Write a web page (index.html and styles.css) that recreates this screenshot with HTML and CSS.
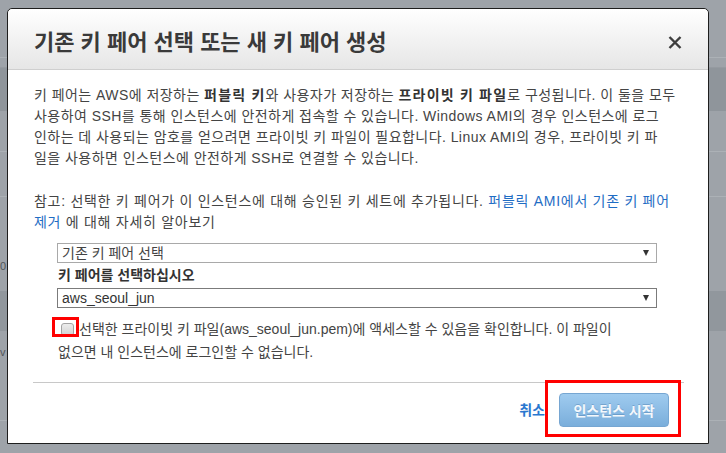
FILE: index.html
```html
<!DOCTYPE html>
<html lang="ko">
<head>
<meta charset="utf-8">
<title>키 페어</title>
<link rel="stylesheet" href="styles.css">
</head>
<body>
<div class="backdrop">
  <div class="band band-top"></div>
  <div class="band band-gap"></div>
  <div class="band band-dark"></div>
  <div class="band band-row"></div>
  <div class="band band-row2"></div>
  <div class="band band-tall"><span class="frag frag-0">0</span></div>
  <div class="band band-dark2"></div>
  <div class="band band-row3"><span class="frag frag-v">v</span></div>
  <div class="band band-rest"></div>
</div>

<div class="modal">
  <div class="modal-header">
    <h1 class="modal-title">기존 키 페어 선택 또는 새 키 페어 생성</h1>
    <span class="close-btn">
      <svg width="14" height="13" viewBox="0 0 14 13"><path d="M1.5 1 L12.5 12 M12.5 1 L1.5 12" stroke="#3d3d3d" stroke-width="2.4" fill="none"/></svg>
    </span>
  </div>
  <div class="modal-body">
    <p class="intro">키 페어는 AWS에 저장하는 <b>퍼블릭 키</b>와 사용자가 저장하는 <b>프라이빗 키 파일</b>로 구성됩니다. 이 둘을 모두<br>사용하여 SSH를 통해 인스턴스에 안전하게 접속할 수 있습니다. Windows AMI의 경우 인스턴스에 로그<br>인하는 데 사용되는 암호를 얻으려면 프라이빗 키 파일이 필요합니다. Linux AMI의 경우, 프라이빗 키 파<br>일을 사용하면 인스턴스에 안전하게 SSH로 연결할 수 있습니다.</p>
    <p class="note">참고: 선택한 키 페어가 이 인스턴스에 대해 승인된 키 세트에 추가됩니다. <a class="link" href="#">퍼블릭 AMI에서 기존 키 페어<br>제거</a> 에 대해 자세히 알아보기</p>
    <div class="form">
      <div class="select"><span>기존 키 페어 선택</span><span class="arrow"></span></div>
      <div class="field-label">키 페어를 선택하십시오</div>
      <div class="select select-focus"><span>aws_seoul_jun</span><span class="arrow"></span></div>
    </div>
    <p class="ack"><span class="checkbox"></span>선택한 프라이빗 키 파일(aws_seoul_jun.pem)에 액세스할 수 있음을 확인합니다. 이 파일이<br>없으면 내 인스턴스에 로그인할 수 없습니다.</p>
  </div>
  <div class="modal-footer">
    <a class="cancel" href="#">취소</a>
    <span class="launch">인스턴스 시작</span>
  </div>
</div>

<span class="mark mark-check"></span>
<span class="mark mark-launch"></span>
</body>
</html>
```

FILE: styles.css
```css
html, body {
  margin: 0;
  padding: 0;
}
body {
  width: 726px;
  height: 453px;
  overflow: hidden;
  background: #9ea3a9;
  font-family: "Liberation Sans", "Noto Sans CJK KR", sans-serif;
  font-size: 14px;
  color: #444;
}

/* dimmed page behind the modal */
.backdrop {
  display: flex;
  flex-direction: column;
  height: 453px;
}
.band { position: relative; }
.band-top { height: 57px; border-bottom: 1px solid #acb1b6; }
.band-gap { height: 9px; }
.band-dark { height: 43px; background: #8f959b; border-top: 1px solid #959aa0; }
.band-row { height: 40px; border-bottom: 1px solid #acb1b6; }
.band-row2 { height: 44px; border-bottom: 1px solid #acb1b6; }
.band-tall { height: 94px; }
.band-dark2 { height: 40px; background: #91979d; }
.band-row3 { height: 89px; border-bottom: 1px solid #acb1b6; }
.band-rest { flex: 1; }
.frag {
  position: absolute;
  left: 0;
  font-size: 11px;
  color: #50555a;
}
.frag-0 { top: 63px; }
.frag-v { top: 15px; }

/* modal */
.modal {
  position: absolute;
  left: 7px;
  top: 8px;
  width: 702px;
  height: 436px;
  box-sizing: border-box;
  background: #fff;
  border: 1px solid #1e1e1e;
  border-radius: 5px 5px 0 0;
  display: flex;
  flex-direction: column;
}
.modal-header {
  height: 61px;
  box-sizing: border-box;
  padding: 7px 26px 0 26px;
  display: flex;
  align-items: center;
  justify-content: space-between;
  background: linear-gradient(#ffffff, #e6e6e6);
  border-bottom: 1px solid #cfcfcf;
  border-radius: 5px 5px 0 0;
}
.modal-title {
  margin: 0;
  font-size: 22px;
  font-weight: 700;
  color: #3a3a3a;
  line-height: 28px;
}
.close-btn {
  display: flex;
  width: 14px;
  height: 13px;
}

.modal-body {
  padding: 15px 24px 0 26px;
}
.intro, .note {
  margin: 0;
  line-height: 21px;
  color: #444;
  white-space: nowrap;
}
.intro { letter-spacing: 0.45px; }
.intro b {
  font-weight: 700;
  color: #333;
  letter-spacing: 1.2px;
}
.note {
  margin-top: 22px;
  letter-spacing: 0.72px;
}
.link {
  color: #1f6dc4;
  text-decoration: none;
}

.form {
  margin: 10px 0 0 23px;
  width: 600px;
}
.select {
  height: 20px;
  box-sizing: border-box;
  border: 1px solid #a9a9a9;
  display: flex;
  align-items: center;
  justify-content: space-between;
  padding: 0 7px 0 4px;
  line-height: 18px;
  color: #444;
}
.select-focus {
  border-color: #7b7b7b;
  color: #333;
}
.arrow {
  width: 0;
  height: 0;
  border-left: 3.5px solid transparent;
  border-right: 3.5px solid transparent;
  border-top: 6px solid #333;
}
.field-label {
  margin: 2px 0 2px 1px;
  line-height: 21px;
  font-weight: 700;
  color: #333;
}

.ack {
  margin: 10px 0 0 24px;
  line-height: 23px;
  color: #444;
  white-space: nowrap;
}
.checkbox {
  display: inline-block;
  width: 13px;
  height: 13px;
  box-sizing: border-box;
  margin: 0 5px 0 3px;
  vertical-align: -2px;
  border: 1px solid #a3a3a3;
  border-radius: 3px;
  background: linear-gradient(#ececec, #d3d3d3);
}

.modal-footer {
  margin: 18px 24px 0 25px;
  padding: 10px 15px 0 0;
  border-top: 1px solid #c8c8c8;
  display: flex;
  justify-content: flex-end;
  align-items: center;
  gap: 14px;
}
.cancel {
  color: #2a78cf;
  font-weight: 700;
  text-decoration: none;
  line-height: 20px;
}
.launch {
  width: 110px;
  height: 34px;
  box-sizing: border-box;
  display: flex;
  align-items: center;
  justify-content: center;
  border: 1px solid #76a6d2;
  border-radius: 4px;
  background: linear-gradient(#9fcbef, #7aaedb);
  color: #f4f8fc;
  font-weight: 700;
  text-shadow: 0 -1px 0 rgba(60, 110, 160, 0.35);
}

/* red annotation boxes */
.mark {
  position: absolute;
  box-sizing: border-box;
  border: 3px solid #ff0000;
}
.mark-check {
  left: 52px;
  top: 317px;
  width: 27px;
  height: 20px;
}
.mark-launch {
  left: 545px;
  top: 380px;
  width: 136px;
  height: 57px;
}
```
